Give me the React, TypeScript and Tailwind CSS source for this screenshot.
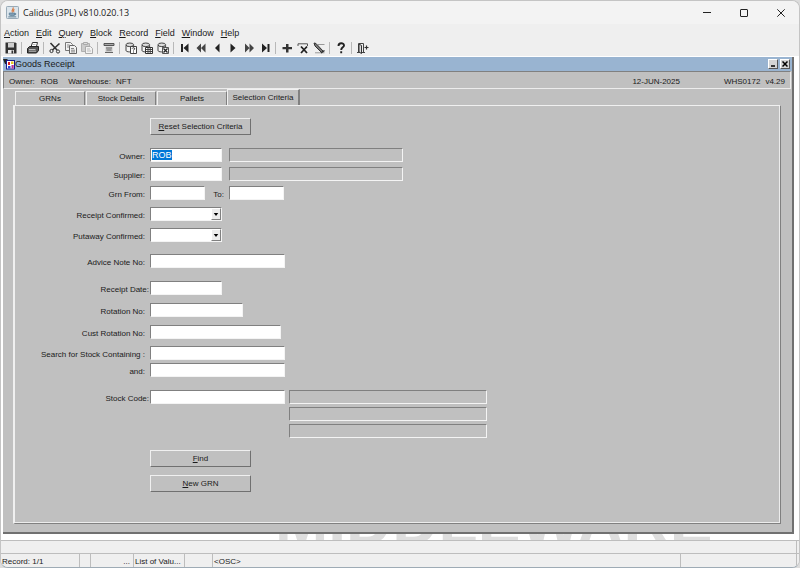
import React, { useEffect, useRef, useState } from 'react';
import clsx from 'clsx';

const menus = ['Action', 'Edit', 'Query', 'Block', 'Record', 'Field', 'Window', 'Help'];
const tabs = ['GRNs', 'Stock Details', 'Pallets', 'Selection Criteria'];

const Barrel = () => (
  <>
    <path d="M1 3.2v5.3c0 .8 1.6 1.4 3.6 1.4h1V5.2h3V3.2" fill="#f4f4f4" stroke="#444" strokeWidth="1" />
    <ellipse cx="4.8" cy="2.8" rx="3.8" ry="1.8" fill="#ddd" stroke="#444" strokeWidth="1" />
  </>
);

const toolGroups: { name: string; icon: React.ReactNode }[][] = [
  [
    {
      name: 'Save',
      icon: (
        <>
          <path d="M.5.5h10l1 1v10H.5z" fill="#333" />
          <path d="M3 1h6v4.5H3z" fill="#cfcfcf" />
          <path d="M3 8h6v3.5H3z" fill="#eee" />
          <path d="M6.5 8.5h1.7v3H6.5z" fill="#333" />
        </>
      ),
    },
  ],
  [
    {
      name: 'Print',
      icon: (
        <>
          <path d="M4 5l1.5-4.5h5L9.3 5z" fill="#fff" stroke="#333" />
          <path d="M.5 6.5l2-2h9v4l-2 2.5h-9z" fill="#555" stroke="#222" />
          <path d="M2 7.5h6.5M5.5 2.5h3M2 9.2h7" stroke="#bbb" />
        </>
      ),
    },
  ],
  [
    {
      name: 'Cut',
      icon: (
        <>
          <path d="M1.5 1l6.5 7M10.5 1.5L3.5 8" stroke="#333" strokeWidth="1.6" />
          <circle cx="2.5" cy="9" r="1.6" fill="none" stroke="#333" />
          <circle cx="9" cy="9.5" r="1.6" fill="none" stroke="#333" />
        </>
      ),
    },
    {
      name: 'Copy',
      icon: (
        <>
          <path d="M.5.5h5l2 2v6h-7z" fill="#f2f2f2" stroke="#777" />
          <path d="M4.5 3.5h5l2 2v6h-7z" fill="#f2f2f2" stroke="#666" />
          <path d="M2 3h2.5M2 5h2M6 6.5h3M6 8.2h4M6 9.9h4" stroke="#888" />
        </>
      ),
    },
    {
      name: 'Paste',
      icon: (
        <>
          <path d="M.5 1.5h8v8h-8z" fill="#ccc" stroke="#b0b0b0" />
          <path d="M2.5.5h4v2h-4z" fill="#ddd" stroke="#aaa" />
          <path d="M4.5 4.5h5l2 2v5h-7z" fill="#f2f2f2" stroke="#aaa" />
          <path d="M6 7h3M6 9h4" stroke="#bbb" />
        </>
      ),
    },
  ],
  [
    {
      name: 'Clear Record',
      icon: (
        <>
          <path d="M1 1.5h10v2H1z" fill="#aaa" stroke="#555" />
          <path d="M2.5 4.5h7V11h-7z" fill="#ccc" />
          <path d="M3 6h6M3.5 8h5M2 10.5h8" stroke="#666" />
        </>
      ),
    },
  ],
  [
    {
      name: 'Enter Query',
      icon: (
        <>
          <Barrel />
          <path d="M5.500 4.500h6v7h-6z" fill="#fff" stroke="#444" />
          <path d="M7.2 6.500c.3-1 2.600-1 2.500.3 0 .8-1.200.8-1.200 1.700M8.500 9.500v1" fill="none" stroke="#222" />
        </>
      ),
    },
    {
      name: 'Execute Query',
      icon: (
        <>
          <Barrel />
          <path d="M4.5 5.5h7v6h-7z" fill="#fff" stroke="#333" />
          <path d="M5 7.5h6M5 9.5h6M7 6v5M9.2 6v5" stroke="#444" />
        </>
      ),
    },
    {
      name: 'Cancel Query',
      icon: (
        <>
          <Barrel />
          <path d="M5.5 5.5h6v6h-6z" fill="#fff" stroke="#555" />
          <path d="M6.5 6.5l4 4M10.5 6.5l-4 4" stroke="#222" strokeWidth="1.3" />
        </>
      ),
    },
  ],
  [
    { name: 'First Record', icon: <path d="M2 2h2v8H2zM9.5 1.5v9L4.5 6z" fill="#222" /> },
    { name: 'Previous Block', icon: <path d="M6 1.500v9L1.500 6zM10.500 1.500v9L6 6z" fill="#444" /> },
    { name: 'Previous Record', icon: <path d="M8.5 1.5v9L4 6z" fill="#222" /> },
    { name: 'Next Record', icon: <path d="M3.5 1.5v9L8.5 6z" fill="#222" /> },
    { name: 'Next Block', icon: <path d="M2 1.500v9L6.500 6zM6.500 1.500v9L11 6z" fill="#444" /> },
    { name: 'Last Record', icon: <path d="M8.5 2h2v8h-2zM3 1.5v9L8 6z" fill="#222" /> },
  ],
  [
    { name: 'Insert Record', icon: <path d="M5 2h2.5v3H11v2.2H7.5v3.3H5V7.2H1.5V5H5z" fill="#333" /> },
    {
      name: 'Remove Record',
      icon: (
        <>
          <path d="M1 4V1.8h9.5V4" fill="none" stroke="#555" />
          <path d="M4 4.5l6 6.500M10 4.500L4 11" stroke="#222" strokeWidth="1.8" />
        </>
      ),
    },
    {
      name: 'Lock Record',
      icon: (
        <>
          <path d="M5 2.5h6.500M2 10.800h9.500" stroke="#999" />
          <path d="M1 1l2 .5 7 7.500-1.500 1.500L2 4z" fill="#777" stroke="#333" />
          <path d="M8 11l3.500-2.500" stroke="#333" strokeWidth="1.5" />
        </>
      ),
    },
  ],
  [
    {
      name: 'Help',
      icon: (
        <path d="M3.500 4c0-3.500 5.500-3.500 5.500-.5C9 5.500 6.200 5.300 6.200 8M6.200 9.300v2" fill="none" stroke="#222" strokeWidth="1.9" />
      ),
    },
  ],
  [
    {
      name: 'Exit',
      icon: (
        <>
          <path d="M1.5 10.5v-9h5v9M0 10.5h8" fill="none" stroke="#444" />
          <path d="M2 2l2.500 1.500v8L2 10z" fill="#ddd" stroke="#333" />
          <path d="M7.500 5.500h4M9.500 3.500v4" stroke="#333" strokeWidth="1.2" />
        </>
      ),
    },
  ],
];

const sunken =
  'h-[14px] border border-t-[#808080] border-l-[#808080] border-b-[#f4f4f4] border-r-[#f4f4f4] shadow-none outline-none rounded-none';

// Underlines the mnemonic letter
const Mnemonic = ({ text }: { text: string }) => (
  <>
    <span className="underline">{text[0]}</span>
    {text.slice(1)}
  </>
);

const Row = ({
  id,
  label,
  tight,
  className,
  children,
}: {
  id: string;
  label: string;
  tight?: boolean;
  className?: string;
  children: React.ReactNode;
}) => (
  <div className={clsx('flex items-start', className)}>
    <label htmlFor={id} className={clsx('w-[135px] shrink-0 pt-1 text-right whitespace-nowrap', tight ? 'pr-px' : 'pr-[5px]')}>
      {label}
    </label>
    {children}
  </div>
);

const Field = ({ id, className }: { id: string; className: string }) => (
  <input id={id} type="text" className={clsx(sunken, 'bg-white px-px', className)} />
);

const Display = ({ label, className }: { label: string; className: string }) => (
  <input readOnly tabIndex={-1} aria-label={label} className={clsx(sunken, 'bg-[#c0c0c0]', className)} />
);

const YesNo = ({ id }: { id: string }) => (
  <div className="relative w-[72px]">
    <select id={id} defaultValue="" className={clsx(sunken, 'block w-full appearance-none bg-white px-px')}>
      <option value=""></option>
      <option value="Y">Yes</option>
      <option value="N">No</option>
    </select>
    <span className="pointer-events-none absolute top-px right-px flex h-3 w-[10px] items-center justify-center border border-t-white border-l-white border-r-[#808080] border-b-[#808080] bg-[#ececec]">
      <svg viewBox="0 0 6 4" className="h-[3px] w-[6px] shrink-0">
        <path d="M0 0h6L3 4z" fill="#000" />
      </svg>
    </span>
  </div>
);

const FormButton = ({ text, className }: { text: string; className?: string }) => (
  <button
    type="button"
    className={clsx(
      'ml-[135px] h-[17px] w-[101px] shrink-0 border border-t-[#f0f0f0] border-l-[#f0f0f0] border-r-[#707070] border-b-[#707070] bg-[#c0c0c0] text-center',
      className
    )}
  >
    <Mnemonic text={text} />
  </button>
);

const App = () => {
  const [active, setActive] = useState('Selection Criteria');
  const [owner, setOwner] = useState('ROB');
  const ownerRef = useRef<HTMLInputElement>(null);

  useEffect(() => {
    ownerRef.current?.focus();
    ownerRef.current?.select();
  }, []);

  return (
    <div className="flex min-h-screen bg-[#dcdcdc] font-['Liberation_Sans',Arial,sans-serif] text-[8px] leading-[10px] text-[#1a1a1a]">
      <div className="flex min-w-0 flex-1 flex-col overflow-hidden rounded-lg border border-[#c4c4c4] border-b-[#9eabb5] bg-[#efefef]">
        {/* Title bar */}
        <header className="flex h-[23px] items-center bg-[#f3f3f3] pl-[5px]">
          <svg viewBox="0 0 14 14" className="h-[13px] w-[13px]">
            <rect x=".5" y=".5" width="13" height="13" rx="1" fill="#dbe5ec" stroke="#8ea1b0" />
            <path d="M7.500 1.500c1.500 2-2.500 2.500-.5 5.500M9 3.500c-1.500 1-1 1.800-.5 3" fill="none" stroke="#d9763c" strokeWidth="1.2" />
            <path d="M3.500 7.500h6v2.200c0 1-5.500 1-6 0zM9.500 8c2-.3 1.800 1.500-.3 1.500" fill="#7e9db5" stroke="#55788f" strokeWidth=".7" />
            <path d="M2.500 11.700h8.500" stroke="#55788f" />
          </svg>
          <h1 className="ml-1 flex-1 font-['Open_Sans','Noto_Sans',sans-serif] text-[9px]">Calidus (3PL) v810.020.13</h1>
          <div className="flex h-full">
            <button type="button" aria-label="Minimize" className="flex w-[37px] items-center justify-center">
              <svg viewBox="0 0 8 8" className="h-2 w-2"><path d="M0 3.5h8" stroke="#222" /></svg>
            </button>
            <button type="button" aria-label="Maximize" className="flex w-[37px] items-center justify-center">
              <svg viewBox="0 0 8 8" className="h-2 w-2"><rect x=".5" y=".5" width="7" height="7" rx=".5" fill="none" stroke="#222" /></svg>
            </button>
            <button type="button" aria-label="Close" className="flex w-[37px] items-center justify-center">
              <svg viewBox="0 0 8 8" className="h-2 w-2"><path d="M.3.3l7.4 7.4M7.7.3L.3 7.7" stroke="#222" /></svg>
            </button>
          </div>
        </header>

        {/* Menu */}
        <nav className="flex h-[18px] items-center gap-[7px] pl-[3px] text-[9px]">
          {menus.map((m) => (
            <button key={m} type="button">
              <Mnemonic text={m} />
            </button>
          ))}
        </nav>

        {/* Toolbar */}
        <div role="toolbar" aria-label="Tools" className="flex h-[14px] items-start pl-[2px]">
          {toolGroups.map((group, i) => (
            <React.Fragment key={i}>
              {i > 0 && <span className="mr-[3px] ml-[2px] h-3 w-px bg-[#b8b8b8]" />}
              {group.map((tool) => (
                <button key={tool.name} type="button" title={tool.name} aria-label={tool.name} className="flex w-4 justify-center">
                  <svg viewBox="0 0 12 12" className="h-3 w-3">{tool.icon}</svg>
                </button>
              ))}
            </React.Fragment>
          ))}
        </div>

        {/* Workspace */}
        <main className="relative flex flex-1 flex-col bg-white pt-px pb-[6px] pl-[2px]">
          {/* Backdrop wordmark: the form window covers all but its feet */}
          <span
            aria-hidden="true"
            className="absolute -bottom-3 left-[274px] text-[64px] leading-[60px] font-bold text-[#dedede]"
          >
            MIDDLEWARE
          </span>
          <section className="relative mr-[5px] flex flex-1 flex-col border-r-2 border-b-2 border-[#707070] bg-[#c0c0c0]">
            <div className="flex h-[14px] items-center bg-[#99b4d1] pr-[2px] text-[9px]">
              <svg viewBox="0 0 12 12" className="h-3 w-3">
                <path d="M0 1h4l1 1v4H2z" fill="#222" />
                <rect x="3.5" y="2.5" width="8" height="8.5" fill="#fff" stroke="#1a1a8c" />
                <path d="M5 4h2v3H5z" fill="#d22" />
                <path d="M8 3.5h2.5V6H8z" fill="#e8c820" />
                <path d="M5 8h2.5v2.5H5z" fill="#2848d8" />
                <path d="M8.5 7h2.2v3.5H8.5z" fill="#b0309a" />
              </svg>
              <h2 className="flex-1">Goods Receipt</h2>
              <button type="button" aria-label="Minimize form" className="flex h-[10px] w-[10px] items-center justify-center border border-white border-r-[#555] border-b-[#555] bg-[#d4d4d4]">
                <svg viewBox="0 0 6 6" className="h-[6px] w-[6px] shrink-0"><path d="M1 5h4" stroke="#000" strokeWidth="1.5" /></svg>
              </button>
              <button type="button" aria-label="Close form" className="ml-[2px] flex h-[10px] w-[10px] items-center justify-center border border-white border-r-[#555] border-b-[#555] bg-[#d4d4d4]">
                <svg viewBox="0 0 6 6" className="h-[6px] w-[6px] shrink-0"><path d="M.5.5l5 5M5.5.5l-5 5" stroke="#000" strokeWidth="1.5" /></svg>
              </button>
            </div>

            <div className="mr-px flex h-[18px] items-center border border-t-[#808080] border-r-[#ececec] border-b-[#ececec] border-l-[#808080] pt-1 pr-[5px] pl-[5px]">
              <span>Owner:</span>
              <span className="ml-[6px]">ROB</span>
              <span className="ml-[10px]">Warehouse:</span>
              <span className="ml-[5px]">NFT</span>
              <span className="ml-auto">12-JUN-2025</span>
              <span className="ml-11">WHS0172</span>
              <span className="ml-[5px]">v4.29</span>
            </div>

            <div role="tablist" className="ml-[11px] flex h-4 items-end">
              {tabs.map((t) => (
                <button
                  key={t}
                  type="button"
                  role="tab"
                  aria-selected={t === active}
                  onClick={() => setActive(t)}
                  className={clsx(
                    'border-t border-l border-t-[#f0f0f0] border-l-[#f0f0f0] border-r-[#808080]',
                    t === active ? 'h-4 w-[73px] border-r-2 pt-px' : 'ml-px h-[14px] w-[70px] border-r'
                  )}
                >
                  {t}
                </button>
              ))}
            </div>

            <div className="mr-[11px] mb-2 ml-[10px] flex flex-1 flex-col border-t border-r border-b border-l-2 border-t-[#f0f0f0] border-r-[#808080] border-b-[#808080] border-l-[#f0f0f0]">
              <form className="flex flex-1 flex-col border-r border-b border-[#ececec] pt-3 pb-6" onSubmit={(e) => e.preventDefault()}>
                <FormButton text="Reset Selection Criteria" />

                <Row id="owner" label="Owner:" className="mt-[13px]">
                  <input
                    id="owner"
                    ref={ownerRef}
                    type="text"
                    value={owner}
                    onChange={(e) => setOwner(e.target.value)}
                    className={clsx(sunken, 'w-[72px] bg-white px-px text-[9px] caret-transparent selection:bg-[#0078d7] selection:text-white')}
                  />
                  <Display label="Owner name" className="ml-[7px] w-[174px]" />
                </Row>
                <Row id="supplier" label="Supplier:" className="mt-[5px]">
                  <Field id="supplier" className="w-[72px]" />
                  <Display label="Supplier name" className="ml-[7px] w-[174px]" />
                </Row>
                <Row id="grn-from" label="Grn From:" className="mt-[5px]">
                  <Field id="grn-from" className="w-[55px]" />
                  <label htmlFor="grn-to" className="w-6 pt-1 pr-[5px] text-right">To:</label>
                  <Field id="grn-to" className="w-[55px]" />
                </Row>
                <Row id="receipt-confirmed" label="Receipt Confirmed:" className="mt-[7px]">
                  <YesNo id="receipt-confirmed" />
                </Row>
                <Row id="putaway-confirmed" label="Putaway Confirmed:" className="mt-[7px]">
                  <YesNo id="putaway-confirmed" />
                </Row>
                <Row id="advice-note" label="Advice Note No:" className="mt-3">
                  <Field id="advice-note" className="w-[135px]" />
                </Row>
                <Row id="receipt-date" label="Receipt Date:" tight className="mt-[13px]">
                  <Field id="receipt-date" className="w-[72px]" />
                </Row>
                <Row id="rotation" label="Rotation No:" className="mt-2">
                  <Field id="rotation" className="w-[93px]" />
                </Row>
                <Row id="cust-rotation" label="Cust Rotation No:" className="mt-2">
                  <Field id="cust-rotation" className="w-[131px]" />
                </Row>
                <Row id="search-1" label="Search for Stock Containing :" className="mt-[7px]">
                  <Field id="search-1" className="w-[135px]" />
                </Row>
                <Row id="search-2" label="and:" className="mt-[3px]">
                  <Field id="search-2" className="w-[135px]" />
                </Row>
                <Row id="stock-code" label="Stock Code:" tight className="mt-[13px]">
                  <Field id="stock-code" className="w-[135px]" />
                  <div className="ml-1 flex flex-col gap-[3px]">
                    <Display label="Stock description 1" className="w-[198px]" />
                    <Display label="Stock description 2" className="w-[198px]" />
                    <Display label="Stock description 3" className="w-[198px]" />
                  </div>
                </Row>

                <FormButton text="Find" className="mt-3" />
                <FormButton text="New GRN" className="mt-2" />
              </form>
            </div>
          </section>
        </main>

        {/* Message line and status bar */}
        <footer className="relative border-t border-[#bdbdbd] bg-[#efefef]">
          <div className="mr-[2px] h-3 border-r border-[#bdbdbd]" />
          <div className="flex h-[14px] items-center border-t border-[#bdbdbd] *:h-full *:border-r *:border-[#bdbdbd] *:pt-[3px] *:pl-px">
            <span className="w-[79px]">Record: 1/1</span>
            <span className="w-[11px]" />
            <span className="w-[43px] pr-[3px] text-right">...</span>
            <span className="w-[51px]">List of Valu...</span>
            <span className="w-[28px]" />
            <span className="flex-1">&lt;OSC&gt;</span>
            <span className="mr-[2px] w-[116px]" />
          </div>
        </footer>
      </div>
    </div>
  );
};

export default App;
